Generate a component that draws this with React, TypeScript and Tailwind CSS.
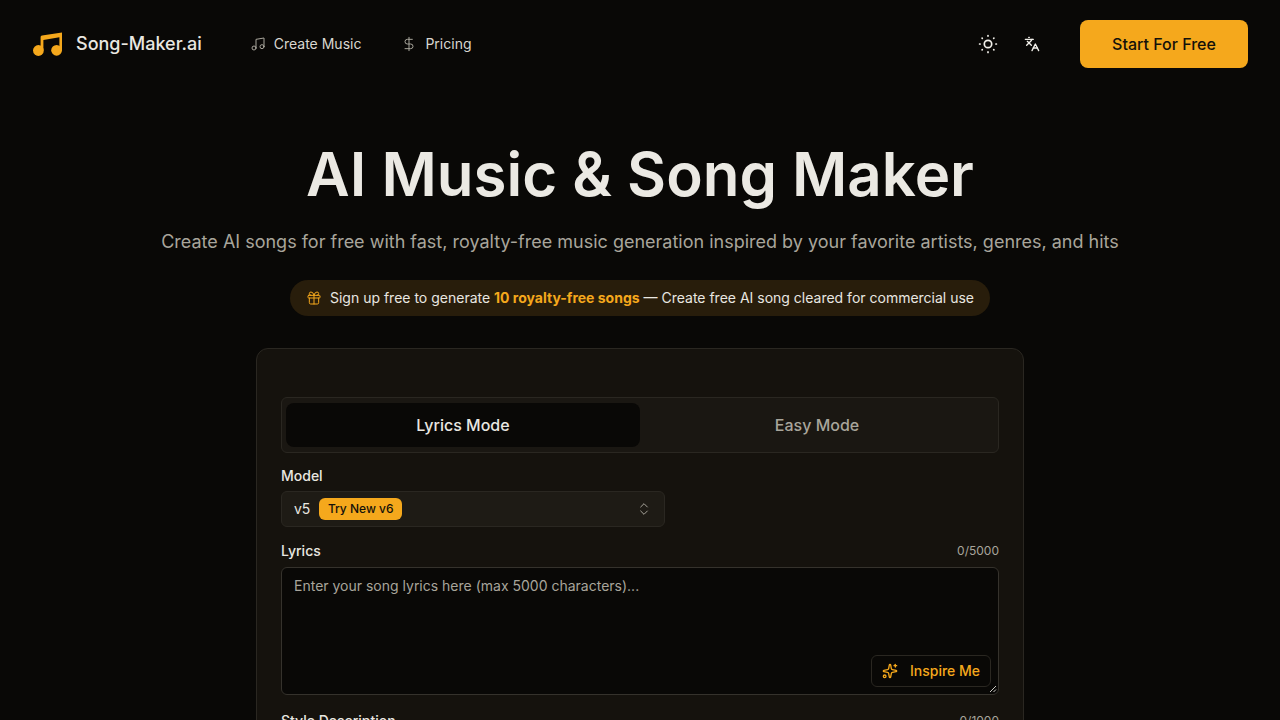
import React from "react";
import {
  ChevronsUpDown,
  DollarSign,
  Gift,
  Languages,
  Music,
  Sparkles,
} from "lucide-react";

const LogoIcon = () => (
  <svg width="30" height="24" viewBox="0 0 30 24" fill="#f5a81c">
    <circle cx="5.4" cy="18.5" r="5.4" />
    <circle cx="23.6" cy="18.3" r="5.4" />
    <path d="M7.6 18 V5 Q7.6 3.6 9 3.4 L29 0.4 V18 H26.4 V5.2 L10.4 8 V18 Z" />
  </svg>
);

const SunIcon = () => (
  <svg width="20" height="20" viewBox="0 0 20 20" fill="none" stroke="#f2f0ea" strokeWidth="1.7" strokeLinecap="round">
    <circle cx="10" cy="10" r="3.7" />
    <path d="M10 1.6v.5M10 17.9v.5M1.6 10h.5M17.9 10h.5M4.1 4.1l.2.2M15.7 15.7l.2.2M4.1 15.9l.2-.2M15.7 4.3l.2-.2" />
  </svg>
);

const navItems = [
  { title: "Create Music", icon: Music },
  { title: "Pricing", icon: DollarSign },
];

const Header = () => {
  return (
    <header className="flex h-[88px] items-center justify-between pl-[33px] pr-8">
      <div className="flex items-center">
        <div className="flex items-center gap-[13px]">
          <LogoIcon />
          <span className="text-lg font-medium text-[#e9e7e1]">Song-Maker.ai</span>
        </div>
        <nav className="ml-12 flex items-center gap-10">
          {navItems.map((item, index) => {
            const Icon = item.icon;
            return (
              <div key={index} className="flex items-center gap-2 text-sm text-[#d9d7d0]">
                <Icon size={16} strokeWidth={1.5} className="text-[#a8a59b]" />
                <span>{item.title}</span>
              </div>
            );
          })}
        </nav>
      </div>
      <div className="flex items-center">
        <SunIcon />
        <Languages size={16} className="ml-[26px] text-[#f2f0ea]" />
        <button className="ml-10 h-12 w-[168px] rounded-lg bg-[#f5a81c] text-base font-medium text-[#14110a]">
          Start For Free
        </button>
      </div>
    </header>
  );
};

const Field = ({ label, count }: { label: string; count: string }) => (
  <div className="flex items-center justify-between">
    <span className="text-sm font-medium text-[#e9e7e1]">{label}</span>
    <span className="text-xs text-[#a8a59b]">{count}</span>
  </div>
);

const MusicForm = () => {
  return (
    <div className="mx-auto mt-8 w-[768px] rounded-xl border border-[#2a2721] bg-[#15120d] px-6 pb-6 pt-12">
      <div className="flex h-14 rounded-md border border-[#2a2721] bg-[#1a1712] px-1 py-[5px]">
        <div className="flex w-1/2 items-center justify-center rounded-lg bg-[#090806] text-base font-medium text-[#e9e7e1]">
          Lyrics Mode
        </div>
        <div className="flex w-1/2 items-center justify-center text-base font-medium text-[#a8a59b]">
          Easy Mode
        </div>
      </div>

      <div className="mt-[13px] text-sm font-medium text-[#e9e7e1]">Model</div>
      <div className="mt-[5px] flex h-9 w-[384px] items-center justify-between rounded-md border border-[#2a2721] bg-[#1e1b15] pl-3 pr-3">
        <div className="flex items-center gap-[9px]">
          <span className="text-sm text-[#e9e7e1]">v5</span>
          <span className="rounded-md bg-[#f5a81c] px-[8.5px] py-[3px] text-xs font-medium text-[#14110a]">
            Try New v6
          </span>
        </div>
        <ChevronsUpDown size={16} strokeWidth={1.5} className="text-[#a8a59b]" />
      </div>

      <div className="mt-3.5">
        <Field label="Lyrics" count="0/5000" />
      </div>
      <div className="relative mt-1.5 h-32 rounded-md border border-[#35322c] bg-[#090806] px-3 py-2 text-sm text-[#a8a59b]">
        Enter your song lyrics here (max 5000 characters)...
        <div className="absolute bottom-[7px] right-[7px] flex h-8 w-[120px] items-center gap-2 rounded-md border border-[#2a2721] bg-[#090806] pl-2.5 text-sm font-medium text-[#f5a81c]">
          <Sparkles size={16} />
          <span className="ml-1">Inspire Me</span>
        </div>
        <svg className="absolute bottom-px right-px" width="8" height="8" viewBox="0 0 8 8" stroke="#c8c6c0" strokeWidth="1">
          <path d="M1 7 L7 1 M4.5 7 L7 4.5" />
        </svg>
      </div>

      <div className="mt-4">
        <Field label="Style Description" count="0/1000" />
      </div>
    </div>
  );
};

export default function App() {
  return (
    <div className="h-screen overflow-hidden bg-[#090806] font-['Inter',sans-serif] antialiased">
      <Header />
      <main>
        <h1 className="mt-[53px] text-center text-[60px] font-semibold leading-[66px] text-[#ebe9e3]">
          AI Music &amp; Song Maker
        </h1>
        <p className="mt-[21px] text-center text-lg text-[#a8a59b]">
          Create AI songs for free with fast, royalty-free music generation inspired by your favorite artists, genres, and hits
        </p>
        <div className="mt-[24px] flex justify-center">
          <div className="flex h-9 items-center gap-2 rounded-full bg-[#281d0b] px-4 text-sm text-[#e9e7e1]">
            <Gift size={16} strokeWidth={1.5} className="text-[#f5a81c]" />
            <span>
              Sign up free to generate{" "}
              <span className="font-bold text-[#f5a81c]">10 royalty-free songs</span>{" "}
              — Create free AI song cleared for commercial use
            </span>
          </div>
        </div>
        <MusicForm />
      </main>
    </div>
  );
}
